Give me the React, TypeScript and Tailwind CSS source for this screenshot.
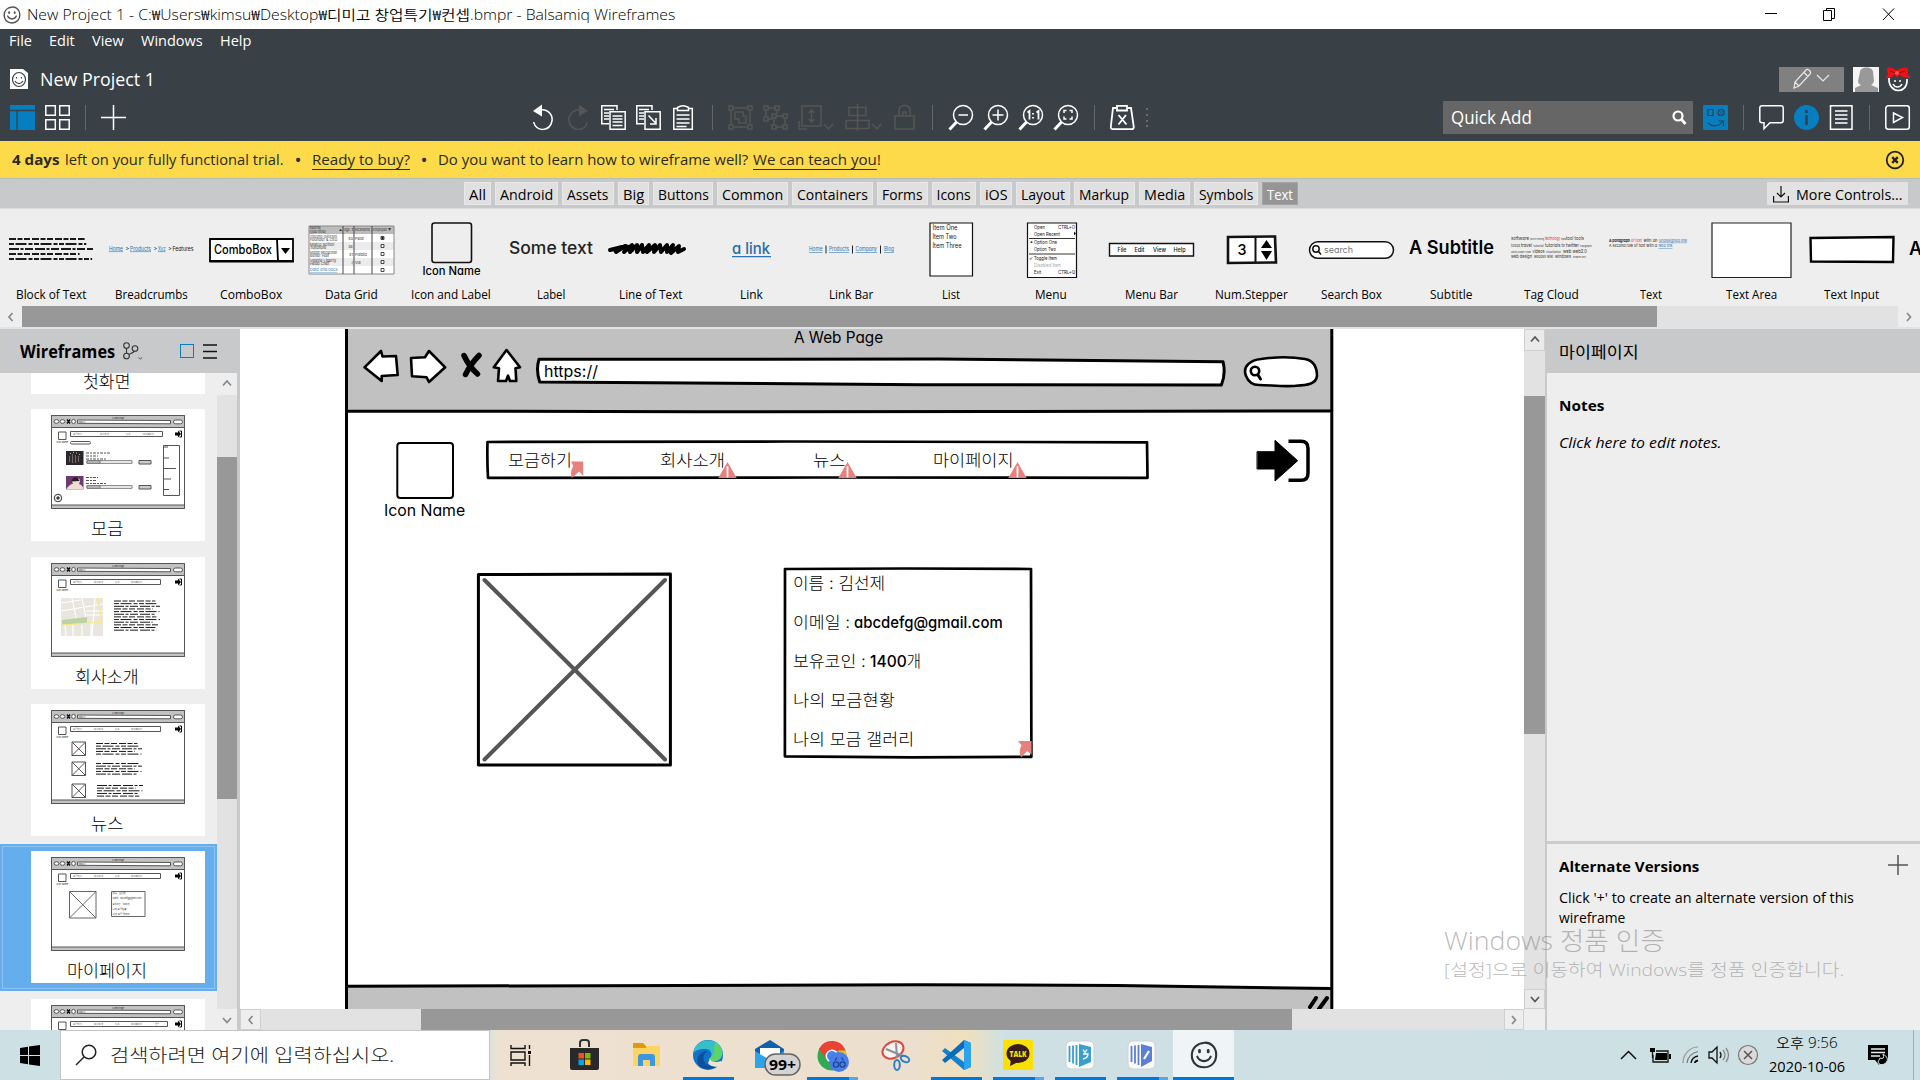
import React, { useLayoutEffect, useRef, useState } from "react";

/** Single-line text stretched or condensed to an exact width. */
function Fit({ w, className = "", children }: { w: number; className?: string; children: React.ReactNode }) {
  const ref = useRef<HTMLSpanElement>(null);
  const [scale, setScale] = useState(1);
  useLayoutEffect(() => {
    if (ref.current && ref.current.offsetWidth) setScale(w / ref.current.offsetWidth);
  }, [w]);
  return (
    <span className="inline-block shrink-0 whitespace-nowrap" style={{ width: w }}>
      <span ref={ref} className={"inline-block origin-left " + className} style={{ transform: `scaleX(${scale})` }}>
        {children}
      </span>
    </span>
  );
}

/** SVG text whose glyphs are condensed together with their spacing. */
function T(props: React.SVGProps<SVGTextElement>) {
  return <text lengthAdjust="spacingAndGlyphs" {...props} />;
}

function Smiley({ size, stroke = "#333", sw = 1.6 }: { size: number; stroke?: string; sw?: number }) {
  return (
    <svg width={size} height={size} viewBox="0 0 20 20" fill="none" stroke={stroke} strokeWidth={sw} strokeLinecap="round">
      <path d="M10.4 1.2C15 1 18.6 4.6 18.7 9.6 18.8 14.800 15.500 18.800 10 18.800 4.600 18.800 1.200 15 1.300 10 1.400 5 5 1.600 10.400 1.200Z" />
      <path d="M6.800 6.800v1M13 6.800v1" strokeWidth={sw + 0.5} />
      <path d="M5.200 11.200c1.800 4.200 7.800 4.200 9.600 0" />
    </svg>
  );
}

function TitleBar() {
  return (
    <div className="flex h-[29px] items-center bg-white pl-[3px] text-black">
      <Smiley size={18} stroke="#555" />
      <div className="ml-[6px] h-[21px] leading-[20px]">
        <Fit w={648} className="text-[14px] font-[350]">New Project 1 - C:₩Users₩kimsu₩Desktop₩디미고 창업특기₩컨셉.bmpr - Balsamiq Wireframes</Fit>
      </div>
      <div className="ml-auto mr-1 flex h-full items-center">
        <svg width="58" height="29" fill="none" stroke="#000"><path d="M23 13.500h12" /></svg>
        <svg width="58" height="29" fill="none" stroke="#000"><path d="M23.500 10.500h8v10h-8zM26.500 10.500v-2h8v10h-3" /></svg>
        <svg width="58" height="29" fill="none" stroke="#000"><path d="M25 8.500l11 11.500M36 8.500l-11 11.500" /></svg>
      </div>
    </div>
  );
}

const menus = [
  { t: "File", w: 23 },
  { t: "Edit", w: 26 },
  { t: "View", w: 32 },
  { t: "Windows", w: 62 },
  { t: "Help", w: 31 },
];

function Ico({ w = 35, children, dim = false }: { w?: number; children: React.ReactNode; dim?: boolean }) {
  return (
    <svg width={w} height="27" viewBox={`0 0 ${w} 27`} fill="none" stroke={dim ? "#565553" : "#fff"} strokeWidth="1.500" className="shrink-0">
      {children}
    </svg>
  );
}

function Sep({ w }: { w: number }) {
  return (
    <div className="flex h-[25px] shrink-0 justify-center" style={{ width: w }}>
      <div className="w-px bg-[#62686c]" />
    </div>
  );
}

function Lens({ children }: { children: React.ReactNode }) {
  return (
    <Ico>
      <circle cx="15" cy="11" r="9.500" />
      <path d="M8.500 18l-7 7.500" strokeWidth="3" />
      <g transform="translate(.5)">{children}</g>
    </Ico>
  );
}

function Header() {
  return (
    <div className="flex h-[112px] flex-col bg-[#394046] text-white">
      <div className="flex h-[22px] items-center gap-[17px] pl-[9px] leading-[22px]">
        {menus.map((m) => (
          <Fit key={m.t} w={m.w} className="text-[14.500px]">{m.t}</Fit>
        ))}
      </div>
      <div className="mt-[13px] flex h-[30px] items-center pl-[10px]">
        <svg width="18" height="20" viewBox="0 0 18 20">
          <path d="M0 0h13l5 4v16H0z" fill="#fff" />
          <ellipse cx="9" cy="10.500" rx="6.500" ry="7" fill="none" stroke="#394046" strokeWidth="1.200" />
          <path d="M6.500 8v1.500M11.500 8v1.500M5 12c2 3.500 6 3.500 8 0" fill="none" stroke="#394046" strokeWidth="1.200" />
        </svg>
        <div className="ml-3 leading-[26px]">
          <Fit w={115} className="text-[18px]">New Project 1</Fit>
        </div>
        <div className="ml-auto flex items-center">
          <div className="flex h-[25px] w-[65px] items-center justify-center bg-[#808080]">
            <svg width="42" height="22" viewBox="0 0 42 22" fill="none" stroke="#e8e8e8" strokeWidth="1.200">
              <path d="M3 20l1-6L15 2q1.500-1.500 3.500 0.500t0.500 3.500L8 18zM13 4.500l4 4M4 14l4 4M26 7l6 6 6-6" />
            </svg>
          </div>
          <svg width="26" height="25" viewBox="0 0 26 25" className="ml-[9px]">
            <path d="M0 0h26v25H0z" fill="#f5f5f5" />
            <path d="M7 5c0-6 13-6 13 0l1 9c-1 3-2 3-3 4l7 3v4H2v-4l6-3c-2-1-3-2-3-4z" fill="#999" />
          </svg>
          <svg width="24" height="25" viewBox="0 0 24 25" className="ml-[7px] mr-[10px]" fill="none">
            <path d="M3 11c-1 16 19 17 18 1" stroke="#fff" strokeWidth="1.700" />
            <path d="M9 13v2M14 13v2M7 17c2 4 7 4 9 0" stroke="#fff" strokeWidth="1.500" />
            <path d="M1 1q4-2 9.500 2.500Q17-1 22 1l-.5 7q3 1 2.500 3-7 0-11-3.500L11 11 9 7.500Q6 11 0 11q0-2 2-3z" fill="#f01014" />
            <path d="M4 4l5 2M19 4l-6 2" stroke="#a80c0c" />
            <circle cx="11" cy="6" r="2" fill="#ff5050" />
          </svg>
        </div>
      </div>
      <div className="flex h-[37px] items-center pl-[10px] pt-[9px]">
        <Ico>
          <path d="M0 1h25v25H0z" fill="#067ebf" stroke="none" />
          <path d="M0 6.500h25M7 6.500v20" stroke="#394046" strokeWidth="1.300" />
        </Ico>
        <Ico w={25}><path d="M.8 1.800h9.500v9.500H.8zM14.700 1.800h9.500v9.500h-9.500zM.8 15.700h9.500v9.500H.8zM14.700 15.700h9.500v9.500h-9.500z" /></Ico>
        <Sep w={31} />
        <Ico w={25}><path d="M0 13.500h25M12.500 1v25" /></Ico>
        <div className="w-[407px] shrink-0" />
        <Ico><path d="M3 8C13 2 20 10 19 17c-2 10-15 12-18.500 1" /><path d="M9 .5v12L0 7z" fill="#fff" stroke="none" /></Ico>
        <Ico w={33} dim><path d="M17 8C8 2 0 10 1 17c2 10 15 12 18.500 1" /><path d="M11 .5v12L20 7z" fill="#565553" stroke="none" /></Ico>
        <Ico>
          <path d="M16 6V1.800H.8v18H8M3 5.500h10M3 9h5M3 12h5M3 15h5" />
          <path d="M9 7.800h15.200v17.500H9zM11.500 12h10M11.500 15h10M11.500 18h10M11.500 21.500h10" />
        </Ico>
        <Ico w={37}>
          <path d="M16 6V1.800H.8v18H8M3 5.500h10M3 9h5M3 12h5M3 15h5" />
          <path d="M9 7.800h15.200v17.500H9zM12.500 11.500l7.500 8M14 20h6v-6" />
        </Ico>
        <Ico w={25}><path d="M4.500 4.500H.8v20.700h18.500V4.500h-3.500M4.500 6.500V3.500Q10 0 15.500 3.500v3zM3.500 11h13M3.500 15h13M3.500 19h13M3.500 22.500h10" /></Ico>
        <Sep w={28} />
        <div className="w-px shrink-0" />
        <Ico dim><path d="M2 2h4v4H2zM21 2h4v4h-4zM2 21h4v4H2zM21 21h4v4h-4zM6 4h15M6 23h15M4 6v15M23 6v15M8 8h8v4h3v7h-7v-4H8z" /></Ico>
        <Ico dim><path d="M2 2h4v4H2zM13 2h4v4h-4zM2 13h4v4H2zM6 4h7M4 6v7M15 6v4M6 15h4M10 10h4v4h-4zM21 10h4v4h-4zM10 21h4v4h-4zM21 21h4v4h-4zM14 12h7M14 23h7M23 14v7M12 14v7" /></Ico>
        <Ico w={48} dim><path d="M5 2h19v20H5zM2 17v8h8M14.500 6v12M11.500 9l3-3 3 3M11.500 15l3 3 3-3M27 20l4.500 5 4.500-5" /></Ico>
        <Ico w={49} dim><path d="M12.500 0v27M4 3.500h17v8H4zM1 16.500h23v8H1zM27 20l5 5 4-5" /></Ico>
        <Ico w={23} dim><path d="M1 12h19v13H1zM5 12V7q0-5.500 5.500-5.500T16 7v5M9 12V8h3v4" /></Ico>
        <Sep w={31} />
        <Lens><path d="M10 11h9.500" /></Lens>
        <Lens><path d="M9 11h11M14.500 5.500v11" /></Lens>
        <Lens><path d="M9 8.500l2-1.500v8.500M18 8.500l2-1.500v8.500M14.500 9v1.500M14.500 13v1.500" strokeWidth="1.800" /></Lens>
        <Lens><path d="M10.500 9V6.500H13M16 6.500h2.500V9M18.500 12.500V15H16M13 15h-2.500v-2.500" /></Lens>
        <Sep w={12} />
        <div className="w-[10px] shrink-0" />
        <Ico w={35}><path d="M6 4H3L.8 23q0 2.200 2 2.200h19q2 0 2-2.200L21 4h-3M7 1.800h10v4.700H7zM8.500 11l8 9.500M16 11l-7.500 9.500" strokeWidth="1.800" /></Ico>
        <svg width="6" height="25" fill="#6a6d70"><path d="M1 3h2v2H1zM1 9h2v2H1zM1 15h2v2H1zM1 20h2v2H1z" /></svg>
        <div className="ml-auto flex items-center">
          <div className="flex h-[33px] w-[250px] items-center bg-[#666] pl-2 pr-[5px] leading-[28px]">
            <Fit w={81} className="text-[18px]">Quick Add</Fit>
            <svg width="17" height="17" viewBox="0 0 17 17" fill="none" stroke="#fff" strokeWidth="2.200" className="ml-auto mt-px">
              <circle cx="7" cy="7" r="4.500" /><path d="M10.500 10.500l4 4.500" strokeWidth="2.800" />
            </svg>
          </div>
          <div className="w-[10px]" />
          <Ico w={25}>
            <rect y="1" width="25" height="25" rx="1" fill="#067ebf" stroke="none" />
            <path d="M5 5.500h5v6H5z" stroke="#394046" strokeWidth="1.200" /><circle cx="18" cy="8.500" r="3" stroke="#394046" strokeWidth="1.200" />
            <path d="M15.500 5.500l5 6M20.500 5.500l-5 6" stroke="#394046" strokeWidth=".6" />
            <path d="M5 19c4 4 11 4 15-2M15.500 17h5v5" stroke="#394046" strokeWidth="1.200" />
          </Ico>
          <Sep w={31} />
          <Ico><path d="M3 1.800h19q2.200 0 2.200 2.200v12.500q0 2.200-2.200 2.200H11l-6 6v-6H3Q.8 18.700.8 16.500V4Q.8 1.800 3 1.800z" /></Ico>
          <Ico>
            <circle cx="12.500" cy="13.500" r="12.500" fill="#067ebf" stroke="none" />
            <path d="M12.500 6v3M12.500 11v10" stroke="#394046" strokeWidth="2.600" />
          </Ico>
          <Ico w={24}><path d="M1.500 1.800H23v23.500H1.500zM6 7h12.500M6 11h12.500M6 15h12.500M6 19h12.500" /></Ico>
          <Sep w={32} />
          <Ico w={35}><rect x=".8" y="1.800" width="23.500" height="23.500" rx="2.500" /><path d="M8.500 9l9 4.500-9 5z" /></Ico>
        </div>
      </div>
    </div>
  );
}

function Dot() {
  return (
    <div className="flex w-[28px] items-center justify-center text-[19px]">
      •
    </div>
  );
}

function Banner() {
  return (
    <div className="flex h-[37px] items-center bg-[#fdda4a] pl-3 text-[#2b2b1f] leading-[22px]">
      <Fit w={47} className="text-[14.500px] font-bold">4 days</Fit>
      <div className="w-[6px]" />
      <Fit w={219} className="text-[14.500px]">left on your fully functional trial.</Fit>
      <Dot />
      <Fit w={98} className="text-[14.500px] underline underline-offset-4">Ready to buy?</Fit>
      <Dot />
      <Fit w={310} className="text-[14.500px]">Do you want to learn how to wireframe well?</Fit>
      <div className="w-[5px]" />
      <Fit w={124} className="text-[14.500px] underline underline-offset-4">We can teach you</Fit>
      <Fit w={4} className="text-[14.500px]">!</Fit>
      <svg width="20" height="20" viewBox="0 0 20 20" fill="none" stroke="#222" strokeWidth="1.800" className="ml-auto mr-[15px]">
        <circle cx="10" cy="10" r="8.300" /><path d="M7.200 7.200l5.600 5.600M12.800 7.200l-5.600 5.600" strokeWidth="2.400" />
      </svg>
    </div>
  );
}

const tabs: [string, number][] = [
  ["All", 27], ["Android", 63], ["Assets", 51.5], ["Big", 31], ["Buttons", 60.5], ["Common", 71], ["Containers", 81], ["Forms", 50.5],
  ["Icons", 44], ["iOS", 32.5], ["Layout", 54], ["Markup", 60.5], ["Media", 51], ["Symbols", 64.5], ["Text", 36],
];

function Tabs() {
  return (
    <div className="flex h-[31px] items-start border-b border-t border-b-[#dcdddd] border-t-[#b9babc] bg-[#c8c9cb] pl-[464px] pt-[3px] text-black">
      <div className="flex gap-1">
        {tabs.map(([t, w]) => (
          <div
            key={t}
            className={"flex h-[23px] items-center justify-center border pt-px leading-[21px] " + (t === "Text" ? "border-[#a5a5a5] bg-[#959595] text-white" : "border-[#e8e8e8] bg-[#e0e0e0]")}
            style={{ width: w }}
          >
            <Fit w={w - 10} className="text-[14px]">{t}</Fit>
          </div>
        ))}
      </div>
      <div className="ml-auto mr-3 flex h-[23px] w-[141px] items-center bg-[#e2e2e2] pl-[6px] pt-px leading-[21px]">
        <svg width="16" height="17" viewBox="0 0 16 17" fill="none" stroke="#111" strokeWidth="1.200"><path d="M8 0v11M4 7l4 4 4-4M.6 10v6h14.800v-6" /></svg>
        <div className="w-[7px]" />
        <Fit w={106} className="text-[14px]">More Controls...</Fit>
      </div>
    </div>
  );
}

const sketch = "font-[Inter,'Noto_Sans_CJK_KR',sans-serif] [font-feature-settings:'cv11']";

function Scribbles({ x, y, w, rows, gap, seed = 0, sw = 1.6 }: { x: number; y: number; w: number; rows: number; gap: number; seed?: number; sw?: number }) {
  return (
    <g stroke="#1a1a1a" strokeWidth={sw}>
      {Array.from({ length: rows }, (_, i) => {
        const len = w * [0.9, 0.92, 1, 0.84, 0.99][(i + seed) % 5];
        return <path key={i} d={`M${x} ${y + i * gap}h${len}`} strokeDasharray={["7 1.5 5 1.500 6 2", "5 1.500 11 2 4 1.500", "10 1.500 3 1.500 8 2"][(i + seed) % 3]} />;
      })}
    </g>
  );
}

const palette: { name: string; w: number; art: React.ReactNode }[] = [
  { name: "Block of Text", w: 70, art: <Scribbles x={8} y={20} w={84} rows={5} gap={5} sw={2} /> },
  {
    name: "Breadcrumbs", w: 73, art: (
      <g fontSize="5.500" fill="#2b73b2">
        <T x="8" y="31.500" textLength="14" textDecoration="underline">Home</T>
        <T x="24.500" y="31.500" fill="#111">&gt;</T>
        <T x="29" y="31.500" textLength="21" textDecoration="underline">Products</T>
        <T x="52.500" y="31.500" fill="#111">&gt;</T>
        <T x="57" y="31.500" textLength="7.500" textDecoration="underline">Xyz</T>
        <T x="67" y="31.500" fill="#111">&gt;</T>
        <T x="71.500" y="31.500" fill="#111" textLength="21">Features</T>
      </g>
    ),
  },
  {
    name: "ComboBox", w: 62, art: (
      <g>
        <path d="M9 20h83v22H9zM76 20l1 22" fill="#fff" stroke="#000" strokeWidth="1.800" />
        <path d="M8.500 42.300H93" stroke="#000" strokeWidth="2.200" />
        <path d="M80 29h9l-4.500 6z" />
        <T x="13" y="34.500" fontSize="12.500" fontWeight="500" textLength="58">ComboBox</T>
      </g>
    ),
  },
  {
    name: "Data Grid", w: 53, art: (
      <g>
        <path d="M8 7h85v48H8z" fill="#fff" />
        <path d="M8 7h85v8H8z" fill="#bcbcbc" />
        <path d="M8 23h85v8H8zM8 39h85v8H8z" fill="#ececec" />
        <path d="M8 7h85v48H8z" fill="none" stroke="#888" />
        <path d="M42 7v48M53 7v48M71 7v48" stroke="#444" />
        <g fontSize="3.800" fill="#333">
          <T x="9" y="10">Name</T><T x="9" y="14">(job title)</T><T x="38" y="12" fontSize="3">▲</T>
          <T x="43" y="12" textLength="9">Age ⇕</T><T x="54" y="12" textLength="15">Nickname</T><T x="72" y="12" textLength="18">Employee ▼</T>
          <T x="9" y="18.500" textLength="27">Giacomo Guilizzoni</T><T x="9" y="22">Founder &amp; CEO</T>
          <T x="9" y="26.500">Marco Botton</T><T x="9" y="30">Tuttofare</T>
          <T x="9" y="34.500" textLength="27">Mariah Maclachlan</T><T x="9" y="38">Better Half</T>
          <T x="9" y="42.500">Valerie Liberty</T><T x="9" y="46">Head Chef</T>
          <T x="9" y="52" fill="#2b73b2" textDecoration="underline">Data Grid Docs</T>
          <T x="47" y="21">40</T><T x="54" y="21">Peldi</T><T x="47" y="29">38</T><T x="48" y="37">41</T><T x="54" y="37">Patata</T><T x="50" y="45">:)</T><T x="54" y="45">Val</T>
        </g>
        <path d="M80 17.500h3v3h-3zM80 25.500h3v3h-3zM80 33.500h3v3h-3zM80 41.500h3v3h-3zM80 49.500h3v3h-3z" fill="none" stroke="#222" strokeWidth=".8" />
        <path d="M80.500 19h2" stroke="#111" strokeWidth="2" />
      </g>
    ),
  },
  {
    name: "Icon and Label", w: 80, art: (
      <g>
        <rect x="31" y="4" width="39.500" height="39.500" rx="2.500" fill="none" stroke="#111" strokeWidth="1.600" />
        <T x="21.500" y="56" fontSize="11.500" fontWeight="500" textLength="58">Icon Name</T>
      </g>
    ),
  },
  { name: "Label", w: 28, art: <T x="8" y="35" fontSize="17" fontWeight="500" fill="#222" textLength="84">Some text</T> },
  {
    name: "Line of Text", w: 64, art: (
      <path d="M9 31l12-3-6 5 9-6 3 1-4 5 8-7-2 7 7-7 0 7 5-7 1 7 6-7-2 7 8-7-1 7 6-7 1 7 6-7 0 7 6-7-2 8 8-7-1 6 6-3" fill="none" stroke="#000" strokeWidth="4" strokeLinejoin="round" strokeLinecap="round" />
    ),
  },
  {
    name: "Link", w: 23, art: (
      <g>
        <T x="31" y="34.700" fontSize="16" fontWeight="500" fill="#2b6ca8" textLength="38">a link</T>
        <path d="M31 37.700h39" stroke="#2b73b2" strokeWidth="1.300" />
      </g>
    ),
  },
  {
    name: "Link Bar", w: 44, art: (
      <g fontSize="5.500" fill="#2b73b2">
        <T x="8" y="32" textLength="13.500" textDecoration="underline">Home</T>
        <T x="28" y="32" textLength="20" textDecoration="underline">Products</T>
        <T x="54.500" y="32" textLength="21.500" textDecoration="underline">Company</T>
        <T x="83" y="32" textLength="10" textDecoration="underline">Blog</T>
        <path d="M25 26.500v8M51.500 26.500v8M79.500 26.500v8" stroke="#222" />
      </g>
    ),
  },
  {
    name: "List", w: 18, art: (
      <g fontSize="7" fill="#111">
        <path d="M29 4h42.500v53H29z" fill="#fff" stroke="#111" strokeWidth="1.200" />
        <T x="31.500" y="10.500" textLength="25">Item One</T><T x="31.500" y="19.500" textLength="24">Item Two</T><T x="31.500" y="28.700" textLength="29">Item Three</T>
      </g>
    ),
  },
  {
    name: "Menu", w: 32, art: (
      <g fontSize="5.300" fill="#111">
        <path d="M26.500 4h49v54.500h-49z" fill="#fff" stroke="#111" strokeWidth="1.200" />
        <path d="M28 19.500h46M28 35h46" stroke="#333" strokeWidth="1" />
        <T x="33" y="9.500" textLength="11">Open</T><T x="57" y="9.500" textLength="17">CTRL+O</T>
        <T x="33" y="16.500" textLength="26">Open Recent</T><path d="M73 12.500l2 2-2 2z" />
        <T x="29" y="25">•</T><T x="33" y="25" textLength="23">Option One</T><T x="33" y="32" textLength="22">Option Two</T>
        <T x="28" y="41" textLength="4">✓</T><T x="33" y="41" textLength="23">Toggle Item</T>
        <T x="33" y="48" fill="#aaa" textLength="27">Disabled Item</T>
        <T x="33" y="55" textLength="7">Exit</T><T x="57" y="55" textLength="17">CTRL+Q</T>
      </g>
    ),
  },
  {
    name: "Menu Bar", w: 53, art: (
      <g fontSize="6" fill="#111" fontWeight="500">
        <path d="M8.500 24.500h84v12.500h-84z" fill="#fff" stroke="#111" strokeWidth="1.400" />
        <T x="16.500" y="33" textLength="9">File</T><T x="33.500" y="33" textLength="10">Edit</T><T x="52" y="33" textLength="13">View</T><T x="72.500" y="33" textLength="12">Help</T>
      </g>
    ),
  },
  {
    name: "Num.Stepper", w: 73, art: (
      <g>
        <path d="M27 18l47-.5 1 26-48 .5z" fill="#fff" stroke="#111" strokeWidth="2.600" />
        <path d="M54.500 18v26" stroke="#111" strokeWidth="2" />
        <path d="M60 29l5.500-8 5.500 8zM60 32h11l-5.500 9z" />
        <T x="36.500" y="36" fontSize="15" fontWeight="500" textLength="9">3</T>
      </g>
    ),
  },
  {
    name: "Search Box", w: 61, art: (
      <g>
        <rect x="8.500" y="22.800" width="84" height="16.500" rx="8.200" fill="#fff" stroke="#111" strokeWidth="1.500" />
        <circle cx="15" cy="30" r="3.200" fill="none" stroke="#111" strokeWidth="1.500" /><path d="M17.500 32.500l2.500 3" stroke="#111" strokeWidth="1.500" />
        <T x="23" y="33.500" fontSize="9" fill="#777" textLength="29">search</T>
      </g>
    ),
  },
  { name: "Subtitle", w: 42, art: <T x="8" y="34.700" fontSize="18.500" fontWeight="600" textLength="85">A Subtitle</T> },
  {
    name: "Tag Cloud", w: 55, art: (
      <g fontSize="5" fill="#333">
        <T x="10" y="21.300" textLength="18">software</T><T x="29" y="21.300" fontSize="2.500" textLength="14">statistics teaching</T><T x="44" y="21.300" fill="#e22" textLength="15">technology</T><T x="60" y="21.300" fontSize="3">tips</T><T x="65" y="21.300" textLength="18">tool tools</T>
        <T x="10" y="27.500" fontSize="4" textLength="9">toread</T><T x="20" y="27.500" textLength="11">travel</T><T x="32.500" y="27.500" fontSize="3.500" textLength="10">tutorial</T><T x="44" y="27.500" textLength="20">tutorials tv</T><T x="65" y="27.500" textLength="13">twitter</T><T x="79" y="27.500" fontSize="2.500" textLength="12">typography</T>
        <T x="10" y="33.500" fontSize="2.500" textLength="20">ubuntu usability video</T><T x="31.500" y="33.500" textLength="12">videos</T><T x="45" y="33.500" fontSize="3.500" textLength="15">visualization</T><T x="62" y="33.500" textLength="24">web web2.0</T>
        <T x="10" y="39.300" textLength="21">web design</T><T x="33" y="39.300" fontSize="4" textLength="19">webdev wiki</T><T x="54" y="39.300" textLength="16">windows</T><T x="72" y="39.300" fontSize="2.500" textLength="13">wordpress work</T>
      </g>
    ),
  },
  {
    name: "Text", w: 22, art: (
      <g fontSize="4" fill="#222">
        <T x="8" y="22.700" fontWeight="700" textLength="21">A paragraph</T><T x="30" y="22.700" fill="#e22" textLength="11">of text</T><T x="42.500" y="22.700" textLength="14">with an</T><T x="58" y="22.700" fill="#2b73b2" textDecoration="underline" textLength="28">unassigned link</T>
        <T x="8" y="28" textLength="48">A second row of text with a</T><T x="57.500" y="28" fill="#2b73b2" textDecoration="underline" textLength="14">web link</T>
      </g>
    ),
  },
  { name: "Text Area", w: 51, art: <path d="M11 4h79v54.500H11z" fill="#fff" stroke="#222" strokeWidth="1.200" /> },
  { name: "Text Input", w: 55, art: <path d="M9.500 19l83-1-.5 25-82-.5z" fill="#fff" stroke="#000" strokeWidth="2.400" /> },
];

function Palette() {
  return (
    <div className="flex h-[97px] overflow-hidden bg-[#eee] pl-px pt-[10px] text-black">
      {palette.map((p) => (
        <div key={p.name} className="flex w-[100px] shrink-0 flex-col items-center">
          <svg width="100" height="62" viewBox="0 0 100 62" className={sketch}>{p.art}</svg>
          <div className="mt-[3px] leading-[18px]">
            <Fit w={p.w} className="text-[12.500px]">{p.name}</Fit>
          </div>
        </div>
      ))}
      <div className={"shrink-0 pl-2 pt-[18px] text-[18px] font-semibold leading-[24px] " + sketch}>A</div>
    </div>
  );
}

function Arrow({ d, color = "#888" }: { d: "up" | "down" | "left" | "right"; color?: string }) {
  const paths = { up: "M4 9.500l4-4.500 4 4.500", down: "M4 6l4 4.500L12 6", left: "M9.500 4L6 8l3.500 4", right: "M6 4l3.500 4L6 12" };
  return <svg width="16" height="16" viewBox="0 0 16 16" fill="none" stroke={color} strokeWidth="1.700"><path d={paths[d]} /></svg>;
}

function PaletteScroll() {
  return (
    <div className="flex h-[21px] bg-[#e2e2e2]">
      <div className="flex w-[22px] items-center justify-center bg-[#eee]"><Arrow d="left" /></div>
      <div className="w-[1635px] bg-[#989898]" />
      <div className="ml-auto flex w-[22px] items-center justify-center bg-[#eee]"><Arrow d="right" /></div>
    </div>
  );
}

function Thumb({ kind }: { kind: string }) {
  return (
    <svg width="134" height="94" viewBox="0 0 134 94" fill="none" stroke="#555" strokeWidth="1" className={"shrink-0 " + sketch}>
      <path d="M.5.500h133V93.500H.5z" fill="#fff" />
      <path d="M.5.500h133V12.500H.5z" fill="#c2c2c2" />
      <path d="M.5 90h133V93.500H.5z" fill="#c2c2c2" />
      <ellipse cx="5.500" cy="6.500" rx="2.400" ry="1.800" fill="#fff" /><ellipse cx="11.500" cy="6.500" rx="2.400" ry="1.800" fill="#fff" />
      <path d="M16 4.500l3 4M19 4.500l-3 4" stroke="#111" strokeWidth="1.400" />
      <ellipse cx="22.500" cy="6.500" rx="1.800" ry="2.200" fill="#fff" />
      <path d="M26.500 5l93 .5v3.300l-93-.5z" fill="#fff" />
      <rect x="122.500" y="5" width="9" height="3.800" rx="1.900" fill="#fff" />
      <g stroke="none" fill="#222" fontSize="2.700"><T x="61" y="3.600" textLength="12">A Web Page</T><T x="27.500" y="8" textLength="7">https://</T><T x="5.500" y="27.500" textLength="11.500">Icon Name</T></g>
      <path d="M7.500 17h7.500v7.500H7.500z" />
      <path d={kind === "fund" ? "M19.500 16.500h92v5h-92z" : kind === "last" ? "M19.500 16.500h97v5h-97z" : "M19.500 16.500h90v5h-90z"} />
      <g stroke="none" fill="#666" fontSize="2.400">
        <T x="22" y="20" textLength="9">모금하기</T><T x={kind === "fund" ? 49 : 43} y="20" textLength="9">회사소개</T><T x={kind === "fund" ? 75 : 64} y="20" textLength="4.500">뉴스</T><T x={kind === "fund" ? 92 : 80} y="20" textLength="11">마이페이지</T>
        {kind === "last" && <T x="104" y="20" textLength="4">연결</T>}
      </g>
      <path d="M124 17.500h3v-2l3 3.500-3 3.500v-2h-3z" fill="#000" stroke="none" /><path d="M128.500 16h2v6h-2" stroke="#000" />
      {kind === "fund" && (
        <g>
          <rect x="19.500" y="26.500" width="20" height="2.500" rx="1.200" />
          <path d="M15 36h17.500v14H15z" fill="#29262d" stroke="none" />
          <path d="M18.500 41v6M21.500 39v9M24.500 40v8M27.500 41v6" stroke="#77675f" strokeWidth="1.200" />
          <path d="M19 38.500h1M22 37.500h1M25 38h1M28 39.500h1" stroke="#cfae9c" />
          <path d="M15 61h17.500v13.500H15z" fill="#6e3a72" stroke="none" />
          <path d="M15 74.500q4-6 7-5.500-3-6 3-6t3 6q4 1 4.500 5.500z" fill="#f2dcd6" stroke="none" /><path d="M20.500 66.500q1-5 6-4l2 3.500z" fill="#292022" stroke="none" />
          <g strokeWidth="1" strokeDasharray="3 1 2 1"><path d="M35 38h24M35 41h12M35 44h21M35 62.500h12M35 65.500h11M35 68.500h20" /></g>
          <path d="M36 45.700h45v2.600H36zM36 70.700h45v2.600H36z" fill="#fff" stroke="#777" /><path d="M36 45.700h13v2.600H36zM36 70.700h13v2.600H36z" fill="#c2c2c2" stroke="#777" />
          <path d="M88 45.500h12v3.500H88zM88 70.500h12v3.500H88z" fill="#ccc" />
          <path d="M112.500 30.500h16v50h-16z" /><path d="M113 32h4M113 43h5M113 53.500h12M113 64h7M113 74.500h5" strokeWidth="1.200" />
          <circle cx="7" cy="83" r="3.600" strokeWidth="1.300" /><circle cx="7" cy="83" r="1.300" fill="#222" />
        </g>
      )}
      {kind === "about" && (
        <g>
          <path d="M10 35h42v38H10z" fill="#e9e6df" stroke="none" />
          <path d="M10 48l42-7M14 62l1 11M21 35l4 20M31 35l4 20M44 35l-3 38M10 40l20-3M35 48h17M35 52h17M22 62v11M31 62v11M40 60v13" stroke="#fff" strokeWidth="1.200" />
          <path d="M11 57l25-3v6l-25 2z" fill="#bcd2a6" stroke="none" />
          <path d="M11 62l40-3-4-24" stroke="#f8ea7a" strokeWidth="1.200" />
          <Scribbles x={63} y={38} w={46} rows={12} gap={2.65} sw={1} />
        </g>
      )}
      {kind === "news" && (
        <g>
          {[32, 52, 74].map((y, i) => (
            <g key={y}>
              <path d={`M21 ${y}h13.500v13.500h-13.500zM21 ${y}l13.500 13.500M34.500 ${y}l-13.500 13.500`} />
              <Scribbles x={45 + (i === 2 ? 1 : 0)} y={y + 1.5} w={46} rows={5} gap={2.65} seed={i} sw={1} />
            </g>
          ))}
        </g>
      )}
      {kind === "my" && (
        <g>
          <path d="M18.500 34.500H45v26.500H18.500zM18.500 34.500L45 61M45 34.500L18.500 61" stroke="#666" />
          <path d="M60.500 34.500h33.500v25H60.500z" stroke="#666" />
          <g stroke="none" fill="#333" fontSize="2.600"><T x="61.500" y="37" textLength="13">이름 : 김선제</T><T x="61.500" y="42.300" textLength="29">이메일 : abcdefg@gmail.com</T><T x="61.500" y="47.500" textLength="17">보유코인 : 1400개</T><T x="61.500" y="52.600" textLength="14">나의 모금현황</T><T x="61.500" y="58" textLength="17">나의 모금 갤러리</T></g>
        </g>
      )}
    </svg>
  );
}

function Card({ label, w, kind }: { label: string; w: number; kind: string }) {
  return (
    <div className="flex h-[132px] w-[174px] shrink-0 flex-col items-center bg-white pt-[6px]">
      <Thumb kind={kind} />
      <div className="mr-[22px] mt-[8px] leading-[24px]"><Fit w={w} className="text-[16.500px] font-light">{label}</Fit></div>
    </div>
  );
}

function Sidebar() {
  return (
    <div className="flex w-[240px] shrink-0 flex-col border-r-[3px] border-[#c8c9cb] bg-[#eee]">
      <div className="flex h-[44px] shrink-0 items-center bg-[#c8c9cb] pl-5 leading-[24px]">
        <div className="pt-[2px]"><Fit w={95} className="text-[17px] font-bold">Wireframes</Fit></div>
        <svg width="20" height="19" viewBox="0 0 20 19" fill="none" stroke="#333" strokeWidth="1.100" className="ml-2 mt-px">
          <circle cx="3.500" cy="3.500" r="2.800" /><circle cx="12" cy="6.500" r="2.800" /><circle cx="3.500" cy="14" r="2.800" /><path d="M3.500 6.300v5M6 12.500c2-1 5-2 5.500-3.500" /><path d="M15.500 15.500l1.800 1.500 1.800-1.500" strokeWidth=".8" />
        </svg>
        <div className="ml-[37px] h-[14px] w-[14px] border border-[#067ebf]" />
        <svg width="14" height="15" stroke="#111" strokeWidth="1.300" className="ml-[9px]"><path d="M0 1h14M0 7.500h14M0 14h14" /></svg>
      </div>
      <div className="flex min-h-0 flex-1">
        <div className="flex w-[217px] flex-col overflow-hidden">
          <div className="ml-[31px] flex h-[21px] w-[174px] shrink-0 justify-center bg-white pr-[22px]">
            <div className="-mt-px leading-[20px]"><Fit w={48} className="text-[16.500px] font-light">첫화면</Fit></div>
          </div>
          <div className="ml-[31px] mt-[15px] flex flex-col gap-[15.500px]">
            <Card label="모금" w={32} kind="fund" />
            <Card label="회사소개" w={64} kind="about" />
            <Card label="뉴스" w={32} kind="news" />
          </div>
          <div className="mt-[8px] h-[147px] w-[217px] shrink-0 bg-[#64aeee] p-[2px]">
            <div className="h-full border border-[#8cc3f2] pl-[28px] pt-[4px]">
              <Card label="마이페이지" w={80} kind="my" />
            </div>
          </div>
          <div className="ml-[31px] mt-[8px]"><Card label="" w={1} kind="last" /></div>
        </div>
        <div className="flex w-[20px] flex-col bg-[#e2e2e2]">
          <div className="flex h-[22px] items-center justify-center bg-[#eee]"><Arrow d="up" /></div>
          <div className="mt-[62px] h-[342px] bg-[#989898]" />
          <div className="mt-auto flex h-[21px] items-center justify-center bg-[#eee]"><Arrow d="down" /></div>
        </div>
      </div>
    </div>
  );
}

function Note({ x, y, w, children }: { x: number; y: number; w: number; children: React.ReactNode }) {
  return (
    <div className="absolute leading-[24px] text-black" style={{ left: x, top: y - 12 }}>
      <Fit w={w} className="text-[16px] font-light">{children}</Fit>
    </div>
  );
}

function Warn({ x }: { x: number }) {
  return (
    <g>
      <path d={`M${x} 149l9.200-16 9.200 16z`} fill="#e7817e" />
      <path d={`M${x + 9.2} 138v6M${x + 9.2} 145.500v2`} stroke="#fff" strokeWidth="1.800" />
    </g>
  );
}

function Canvas() {
  return (
    <div className={"relative h-[680px] overflow-hidden bg-white " + sketch}>
      <svg width="1284" height="680" viewBox="0 0 1284 680" fill="none" stroke="#000" strokeWidth="3" strokeLinejoin="round" strokeLinecap="round" className="absolute left-0 top-0">
        <path d="M107 0h985v82H107zM107 657l720-1.500 265 4.500v20H107z" fill="#c1c1c1" stroke="none" />
        <path d="M106.500-2v684M1091.800-2v684M107 82l350 .8 300-.2 335-.8" />
        <path d="M107 657.200l250-.5 320-1 200 .8 214 3" />
        <path d="M124.500 38.300L141 22l1.500 5.500 13.500-.5 1.700 19-16 1v5z" fill="#fff" strokeWidth="2.600" />
        <path d="M171 29l14-.7L189 22l16.200 16.300L189 53l-2.400-4.700-14.600-1z" fill="#fff" strokeWidth="2.600" />
        <path d="M224 26.500q5 11 13.500 18.500M239 26.500q-8 8-13.500 19" strokeWidth="5.500" />
        <path d="M266.500 21L280 38.300l-4.500 1 .8 12.700H270l-2-5.300-2 5.300h-8l1-12.700-5.200-1z" fill="#fff" strokeWidth="2.600" />
        <path d="M299 30.300l400-.3 284 2.700q3 12-1.600 23.300l-300-.3L299.700 53q-4-12-.7-22.700z" fill="#fff" />
        <path d="M1006 47c-4-10 5-16 15-17 14-2 32-2 44 0 10 2 12 10 12 17-1 9-12 9-24 10-12 .7-24-1-34-1-7 0-11-4-13-9z" fill="#fff" strokeWidth="2.600" />
        <circle cx="1015" cy="42" r="4.200" strokeWidth="2.600" /><path d="M1018 46l2.500 4" strokeWidth="3" />
        <rect x="157.300" y="114" width="55.700" height="55" rx="3" strokeWidth="2" />
        <path d="M247.500 113l300-.5 359.500.8.500 35.500-330-.3-329.500.3q-1-18-.5-35.800z" strokeWidth="2.700" />
        <path d="M238.400 245.500l192-.6v191l-192 .2z" />
        <path d="M244.500 251L425 430.500M425 251L244.500 430.500" stroke="#565656" strokeWidth="4" />
        <path d="M545 240l120-.5 126 .5.400 187.800-120 .5-126.500-1z" strokeWidth="2.700" />
        <path d="M1017.400 122.700H1035v-11.400l22.700 20.400L1035 152v-12h-17.600z" fill="#000" stroke="#000" strokeWidth="1" />
        <path d="M1048.500 112.200h12.500q7 0 7 7v25q0 7-7 7h-12.500" strokeWidth="3.500" strokeLinecap="butt" />
        <path d="M1070 678l6-9M1079 680l8-11" strokeWidth="4" />
        <g stroke="none">
          <path d="M331 132.500h12.200v14.500l-4-4.500-7.500 6.500q-2-6 1.500-12z" fill="#e7817e" />
          <path d="M778 412h13.600v14l-4.500-4-6 6.500q-3-7 .5-12z" fill="#e7817e" />
        </g>
        <g stroke="none"><Warn x={478.3} /><Warn x={598.3} /><Warn x={768.3} /></g>
      </svg>
      <Note x={554} y={8} w={89}><span className="font-normal">A Web Page</span></Note>
      <Note x={304} y={42} w={54}><span className="font-normal">https://</span></Note>
      <Note x={144} y={181} w={81}><span className="font-normal">Icon Name</span></Note>
      <Note x={268} y={131} w={64}>모금하기</Note>
      <Note x={420} y={131} w={65}>회사소개</Note>
      <Note x={573} y={131} w={32}>뉴스</Note>
      <Note x={693} y={131} w={81}>마이페이지</Note>
      <Note x={553} y={254} w={92}>이름 : 김선제</Note>
      <Note x={553} y={293} w={57}>이메일 :</Note>
      <Note x={613.5} y={293} w={149}><span className="font-medium">abcdefg@gmail.com</span></Note>
      <Note x={553} y={332} w={73}>보유코인 :</Note>
      <Note x={629.5} y={332} w={51.5}><span className="font-medium">1400</span>개</Note>
      <Note x={553} y={371} w={102}>나의 모금현황</Note>
      <Note x={553} y={410} w={121}>나의 모금 갤러리</Note>
    </div>
  );
}

function Editor() {
  return (
    <div className="flex w-[1305px] shrink-0">
      <div className="flex w-[1284px] flex-col">
        <Canvas />
        <div className="flex h-[21px] bg-[#e2e2e2]">
          <div className="flex w-[21px] items-center justify-center border border-[#cfcfcf] bg-[#eee]"><Arrow d="left" /></div>
          <div className="ml-[160px] w-[871px] bg-[#989898]" />
          <div className="ml-auto flex w-[20px] items-center justify-center border border-[#cfcfcf] bg-[#eee]"><Arrow d="right" /></div>
        </div>
      </div>
      <div className="flex w-[21px] flex-col bg-[#e2e2e2]">
        <div className="flex h-[22px] items-center justify-center border border-[#cfcfcf] bg-[#eaeaea]"><Arrow d="up" color="#555" /></div>
        <div className="mt-[45px] h-[338px] bg-[#989898]" />
        <div className="mt-auto flex h-[20px] items-center justify-center border border-[#cfcfcf] bg-[#eaeaea]"><Arrow d="down" color="#555" /></div>
        <div className="h-[21px] bg-[#eee]" />
      </div>
    </div>
  );
}

function Inspector() {
  return (
    <div className="flex flex-1 flex-col border-l-2 border-[#c8c9cb] bg-[#eee] text-black">
      <div className="flex h-[44px] items-center bg-[#c8c9cb] pl-3 pt-[2px] leading-[24px]">
        <Fit w={80} className="text-[16px]">마이페이지</Fit>
      </div>
      <div className="flex h-[468px] flex-col pl-3 pt-[21px] leading-[22px]">
        <Fit w={45} className="text-[15px] font-bold">Notes</Fit>
        <div className="mt-[15px]"><Fit w={163} className="text-[15px] italic">Click here to edit notes.</Fit></div>
      </div>
      <div className="flex flex-1 flex-col border-t-[3px] border-[#cbcccd] pl-3 pt-[11px]">
        <div className="flex items-center justify-between pr-3 leading-[22px]">
          <Fit w={140} className="text-[15px] font-bold">Alternate Versions</Fit>
          <svg width="20" height="20" stroke="#555" strokeWidth="1.500" className="-mt-[2px]"><path d="M0 10h20M10 0v20" /></svg>
        </div>
        <div className="mt-[11px] flex flex-col leading-[19.500px]">
          <Fit w={295} className="text-[14.500px]">Click '+' to create an alternate version of this</Fit>
          <Fit w={66} className="text-[14.500px]">wireframe</Fit>
        </div>
      </div>
    </div>
  );
}

const apps: { id: string; run: "none" | "one" | "many" | "active"; art: React.ReactNode }[] = [
  { id: "store", run: "none", art: <g><path d="M18 8V4q0-3 3-3h3q3 0 3 3v4" fill="none" stroke="#333" strokeWidth="2" /><path d="M8 9h29v20q0 2-2 2H10q-2 0-2-2z" fill="#292929" /><path d="M16.500 14h5.500v5.500h-5.500z" fill="#f25022" /><path d="M23 14h5.500v5.500H23z" fill="#7fba00" /><path d="M16.500 20.500h5.500V26h-5.500z" fill="#00a4ef" /><path d="M23 20.500h5.500V26H23z" fill="#ffb900" /></g> },
  { id: "files", run: "none", art: <g><path d="M9 4h10l3 3h14v20H9z" fill="#fcd462" /><path d="M9 4h10l3 3v2H9z" fill="#dc9b12" /><path d="M14 27v-9q0-3 3-3h11q3 0 3 3v9h-5v-6h-7v6z" fill="#3a97e0" /></g> },
  { id: "edge", run: "one", art: <g><circle cx="22" cy="16" r="15" fill="#1272c8" /><path d="M7.500 14C9 2 22-2 31 4c8 6 7 15 0 18-5 2-9 0-8-2 5-4 2-11-5-10-5 0-9 2-10.500 4z" fill="#35bfc9" /><path d="M29 3c8 5 9 13 5 17-4 3-10 2-11 0 8-6 4-10 6-17z" fill="#5fd26a" /><path d="M22 12c-7 3-6 14 4 15 4 0 7-1 9-3-7 8-19 8-23 1-3-7 4-14 10-13z" fill="#0b4f9e" /><path d="M24 20c1 3 6 4 11 2l2 2-4 4q-9 0-11-4z" fill="#efe3d2" /></g> },
  { id: "mail", run: "none", art: <g><path d="M7 10L22 1l14 9v18H7z" fill="#1160ad" /><path d="M12 9h20v12H12z" fill="#fff" /><path d="M7 12l15 9 14-9v17H7z" fill="#2ea3ec" /><rect x="17" y="15" width="35" height="21" rx="10.500" fill="#d3d3d3" stroke="#666" strokeWidth="1.500" /><T x="21" y="31" fontSize="14" fontWeight="700" textLength="27">99+</T></g> },
  { id: "chrome", run: "many", art: <g><circle cx="22" cy="17" r="14.500" fill="#34a853" /><path d="M9 10A14.500 14.500 0 0 1 35.500 11.500H22z" fill="#ea4335" /><path d="M9 10q6-9 16-7l10.500 8.500H22l-6 8z" fill="#ea4335" /><path d="M35.500 11.500Q40 25 24 31.500l6-13-2-7z" fill="#fbbc05" /><circle cx="22" cy="17" r="6.500" fill="#fff" /><circle cx="22" cy="17" r="5" fill="#4285f4" /><circle cx="29" cy="23" r="10" fill="#4a7de6" /><circle cx="26" cy="25.500" r="2.600" fill="none" stroke="#1d4596" strokeWidth="1.300" /><circle cx="32.500" cy="25.500" r="2.600" fill="none" stroke="#1d4596" strokeWidth="1.300" /><path d="M25 21.500l2-3M31.500 18.500l2 3" stroke="#1d4596" strokeWidth="1.300" /></g> },
  { id: "snip", run: "none", art: <g fill="none"><ellipse cx="21" cy="11" rx="11" ry="8" transform="rotate(-25 21 11)" fill="#f6f2ee" stroke="#d94a43" strokeWidth="2" /><path d="M14 10L31 17M24 4l1 15" stroke="#8b9299" strokeWidth="2" /><ellipse cx="33" cy="20" rx="4.500" ry="2.800" transform="rotate(25 33 20)" stroke="#2d80c4" strokeWidth="2" /><ellipse cx="25" cy="26" rx="2.800" ry="5" stroke="#2d80c4" strokeWidth="2" /></g> },
  { id: "code", run: "one", art: <g><path d="M30 1l7 3v24l-7 3L8 12l3-3 19 14z" fill="#1482cf" /><path d="M30 1l7 3v24l-7 3z" fill="#2ba3ef" /><path d="M30 9L11 24l-3-3L30 1z" fill="#0a6dba" /></g> },
  { id: "talk", run: "many", art: <g><rect x="7" y="1" width="30" height="30" rx="1.500" fill="#fae100" /><ellipse cx="22" cy="14.500" rx="11.500" ry="9.500" fill="#371d1e" /><path d="M15 20l-1 7 8-4z" fill="#371d1e" /><T x="13.500" y="17.500" fontSize="8" fontWeight="800" fill="#fae100" textLength="17">TALK</T></g> },
  { id: "docs", run: "one", art: <g><rect x="8" y="2" width="28" height="28" rx="5" fill="#fafafa" stroke="#ccd3d6" /><path d="M11.500 7v16M15 6.500v18M18.500 6v20" stroke="#3a9fcd" strokeWidth="1.800" /><path d="M21 5l12 3v15l-12 5z" fill="#3a9fcd" /><path d="M25 10.500l2 3 2-3M25 20q5-1 5-5h-5" stroke="#fff" strokeWidth="1.300" fill="none" /></g> },
  { id: "write", run: "many", art: <g><rect x="8" y="2" width="27" height="28" rx="5" fill="#fafafa" stroke="#ccd3d6" /><path d="M11.500 7v16M15 6.500v18M18.500 6v20" stroke="#5b7fd6" strokeWidth="1.800" /><path d="M21 5l11 3v14l-11 6z" fill="#5b7fd6" /><path d="M24 20l5-8" stroke="#fff" strokeWidth="2.200" /></g> },
];

function Taskbar() {
  return (
    <div className="flex h-[50px] bg-[linear-gradient(90deg,#cde0e4_0px,#d0e1e4_480px,#eee1d1_500px,#ecdfcd_920px,#f0e0bd_965px,#cfe0e4_1005px,#cde0e5_1920px)]">
      <div className="flex w-[60px] items-center justify-center">
        <svg width="20" height="21" viewBox="0 0 20 21"><path d="M0 3l8-1.200V10H0zM9 1.600L20 0v10H9zM0 11h8v8.200L0 18zM9 11h11v10L9 19.400z" /></svg>
      </div>
      <div className="flex w-[430px] items-center border border-[#c4c4c4] bg-white pl-[14px] leading-[28px] text-[#222]">
        <svg width="22" height="22" viewBox="0 0 22 22" fill="none" stroke="#222" strokeWidth="1.500"><circle cx="14" cy="8" r="6.800" /><path d="M9 13l-8 8" /></svg>
        <div className="ml-[13px]"><Fit w={284} className="text-[18.500px] font-light">검색하려면 여기에 입력하십시오.</Fit></div>
      </div>
      <div className="flex w-[63px] items-center justify-center">
        <svg width="22" height="21" viewBox="0 0 22 21" fill="none" stroke="#111" strokeWidth="1.400" className="mr-px"><path d="M1 0v3.500h14V0M1 7h14v8H1zM1 21v-3h14v3M19.500 0v4M19.500 10v11" /><path d="M18 6h3v3h-3z" fill="#111" stroke="none" /></svg>
      </div>
      {apps.map((a) => (
        <div key={a.id} className="flex w-[62px] flex-col items-center pt-[9px]">
          <svg width="54" height="38" viewBox="-5 0 54 38" className="shrink-0 overflow-visible">{a.art}</svg>
          {a.run !== "none" && (
            <div className="flex h-[3px] w-[51px] bg-[#0476d8]">{a.run === "many" && <div className="ml-auto w-[9px] bg-[#5ba6e6]" />}</div>
          )}
        </div>
      ))}
      <div className="flex w-[61px] flex-col items-center bg-[#eff5f6] pt-[11px]">
        <div className="h-[36px]"><Smiley size={28} sw={1.5} /></div>
        <div className="h-[3px] w-full bg-[#0476d8]" />
      </div>
      <div className="ml-auto flex items-center text-black">
        <svg width="30" height="20" fill="none" stroke="#111" strokeWidth="1.500"><path d="M1 14l7.500-7.500L16 14" /></svg>
        <svg width="32" height="20"><path d="M6 6h12v11H3v-7" fill="none" stroke="#111" strokeWidth="1.300" /><path d="M6 8h11v7H5zM19 9h2v5h-2zM0 3h5v4H0z" /><path d="M2.500 7v6" stroke="#111" strokeWidth="1.300" /></svg>
        <svg width="26" height="20" fill="none"><path d="M1 18C1 9 8 2 16 2" stroke="#999" strokeWidth="1.200" /><path d="M5 18q1-9 11-11.500" stroke="#777" strokeWidth="1.200" /><path d="M9 18q1-6 7-7" stroke="#111" strokeWidth="1.400" /><path d="M13 18q0-2 3-2.500" stroke="#111" strokeWidth="2" /></svg>
        <svg width="29" height="20" fill="none" stroke="#111" strokeWidth="1.300"><path d="M1 7h3l5-5v16l-5-5H1zM12 7q2 3 0 6" /><path d="M15 5q4 5 0 10M18 3q5 7 0 14" stroke="#888" /></svg>
        <svg width="32" height="22" fill="none"><circle cx="11" cy="11" r="9.500" fill="#dadada" stroke="#777" strokeWidth="1.200" /><path d="M7 7l8 8M15 7l-8 8" stroke="#555" strokeWidth="1.500" /></svg>
        <div className="-mt-[2px] flex w-[76px] flex-col items-center gap-px leading-[22px]">
          <Fit w={62} className="text-[14px] font-[350]">오후 9:56</Fit>
          <Fit w={76} className="text-[14px]">2020-10-06</Fit>
        </div>
        <svg width="45" height="22" viewBox="0 0 45 22" className="ml-[23px]"><path d="M0 1h20v15h-7l-2 5-4-5H0z" /><path d="M3 5h14M3 8.500h14M3 12h9" stroke="#e8eef0" strokeWidth="1.300" /><path d="M12 14q5 2 3-4 7 4 3 9-6 4-8-1z" stroke="#cfe0e4" /></svg>
        <div className="mr-[6px] h-[50px] w-px bg-[#9fb0b4]" />
      </div>
    </div>
  );
}

export default function App() {
  return (
    <div className="relative flex h-[1080px] w-[1920px] flex-col overflow-hidden bg-white font-['Open_Sans','Noto_Sans_CJK_KR',sans-serif]">
      <TitleBar />
      <Header />
      <Banner />
      <Tabs />
      <Palette />
      <PaletteScroll />
      <div className="h-[2px] bg-[#e2e3e4]" />
      <div className="flex h-[701px]">
        <Sidebar />
        <Editor />
        <Inspector />
      </div>
      <Taskbar />
      <div className="pointer-events-none absolute left-[1444px] top-[921px] text-[#8a8a8a]/60">
        <div className="h-[35px] leading-[38px]"><Fit w={221} className="text-[25px] font-light">Windows 정품 인증</Fit></div>
        <div className="leading-[28px]"><Fit w={400} className="text-[17px] font-light">[설정]으로 이동하여 Windows를 정품 인증합니다.</Fit></div>
      </div>
    </div>
  );
}
